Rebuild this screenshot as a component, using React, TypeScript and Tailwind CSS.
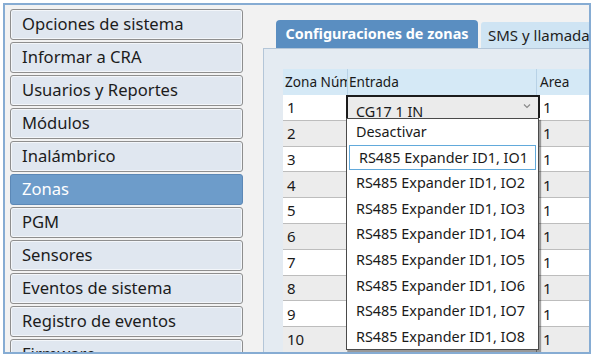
import { FC } from "react";

const MENU = [
  "Opciones de sistema",
  "Informar a CRA",
  "Usuarios y Reportes",
  "Módulos",
  "Inalámbrico",
  "Zonas",
  "PGM",
  "Sensores",
  "Eventos de sistema",
  "Registro de eventos",
  "Firmware",
];

const OPTIONS = [
  "Desactivar",
  "RS485 Expander ID1, IO1",
  "RS485 Expander ID1, IO2",
  "RS485 Expander ID1, IO3",
  "RS485 Expander ID1, IO4",
  "RS485 Expander ID1, IO5",
  "RS485 Expander ID1, IO6",
  "RS485 Expander ID1, IO7",
  "RS485 Expander ID1, IO8",
];

const ROWS = Array.from({ length: 10 }, (_, i) => i + 1);

const font = { fontFamily: '"Noto Sans", "Open Sans", sans-serif' };

export default function App() {
  return (
    <div className="h-[358px] w-[598px] bg-white pl-[3px] pt-[3px]" style={font}>
      <div className="flex h-[351px] w-[588px] overflow-hidden border-2 border-[#86acd3] bg-[#f2f2f2]">
        <Sidebar />
        <ZonesPanel />
      </div>
    </div>
  );
}

const Sidebar: FC = () => (
  <nav className="flex w-[243px] shrink-0 flex-col gap-[2px] pl-[5px] pt-[4px]">
    {MENU.map((label) => {
      const active = label === "Zonas";
      return (
        <div
          key={label}
          className={`flex h-[31px] w-[233px] shrink-0 items-center rounded-[3px] border px-[11px] text-[16.6px] ${
            active
              ? "border-[#5c88b6] bg-[#6d9cca] text-white"
              : "border-[#8e8e8e] bg-[#e0e7f0] text-[#1c1c1c] shadow-[inset_0_0_0_1px_#f3f6fa]"
          }`}
        >
          {label}
        </div>
      );
    })}
  </nav>
);

const ZonesPanel: FC = () => (
  <section className="flex min-w-0 flex-1 flex-col pt-[15px]">
    {/* tabs */}
    <div className="ml-[28px] flex items-end gap-[3px]">
      <div className="flex h-[28px] w-[202px] shrink-0 items-center justify-center rounded-t-[4px] bg-[#5a8ec1] text-[14.4px] font-bold text-white">
        Configuraciones de zonas
      </div>
      <div className="flex h-[26px] shrink-0 items-center rounded-t-[3px] bg-[#cfe4f3] px-[7px] text-[15px] text-[#1e1e1e]">
        SMS y llamadas
      </div>
    </div>

    {/* tab body */}
    <div className="ml-[15px] flex-1 border-l border-t border-[#b4c6d8] bg-[#e4ebf2] pl-[19px] pt-[20px]">
      <div className="relative w-[330px] text-[14.4px] text-[#1a1a1a]">
        <div className="flex h-[26px] bg-[#d5e9f6] text-[13.6px]">
          <div className="flex w-[65px] items-center overflow-hidden whitespace-nowrap border-r border-[#b8d2e6] pl-[2px]">
            Zona Núm
          </div>
          <div className="flex w-[189px] items-center border-r border-[#b8d2e6] pl-[1px]">Entrada</div>
          <div className="flex flex-1 items-center pl-[3px]">Area</div>
        </div>
        {ROWS.map((n) => (
          <div
            key={n}
            className={`flex h-[25.8px] border-b border-[#bdbdbd] text-[15px] ${n % 2 ? "bg-white" : "bg-[#ececec]"}`}
          >
            <div className="flex w-[65px] items-center border-r border-[#bdbdbd] pl-[4px]">{n}</div>
            <div className="w-[189px] border-r border-[#9a9a9a]" />
            <div className="flex flex-1 items-center pl-[6px]">1</div>
          </div>
        ))}

        {/* open combo box */}
        <div className="absolute left-[63px] top-[26px] w-[194px]">
          <div className="relative h-[23px] overflow-hidden border-2 border-b-0 border-[#1b1b1b] bg-[#ebebeb]">
            <span className="absolute left-[8px] top-[8px] leading-none">CG17 1 IN</span>
            <svg className="absolute right-[7px] top-[6px]" width="8" height="6" viewBox="0 0 8 6">
              <path d="M1 1.5 4 4.5 7 1.5" fill="none" stroke="#8a8a8a" strokeWidth="1.2" />
            </svg>
          </div>
          <ul className="w-[193px] border border-[#4a4a4a] bg-white shadow-[2px_2px_1px_rgba(0,0,0,0.35)]">
            {OPTIONS.map((opt, i) => (
              <li
                key={opt}
                className={`flex h-[25.6px] items-center whitespace-nowrap pl-[9px] ${
                  i === 1 ? "mx-[2px] border border-[#62aadb] pl-[7px]" : ""
                }`}
              >
                {opt}
              </li>
            ))}
          </ul>
        </div>
      </div>
    </div>
  </section>
);
